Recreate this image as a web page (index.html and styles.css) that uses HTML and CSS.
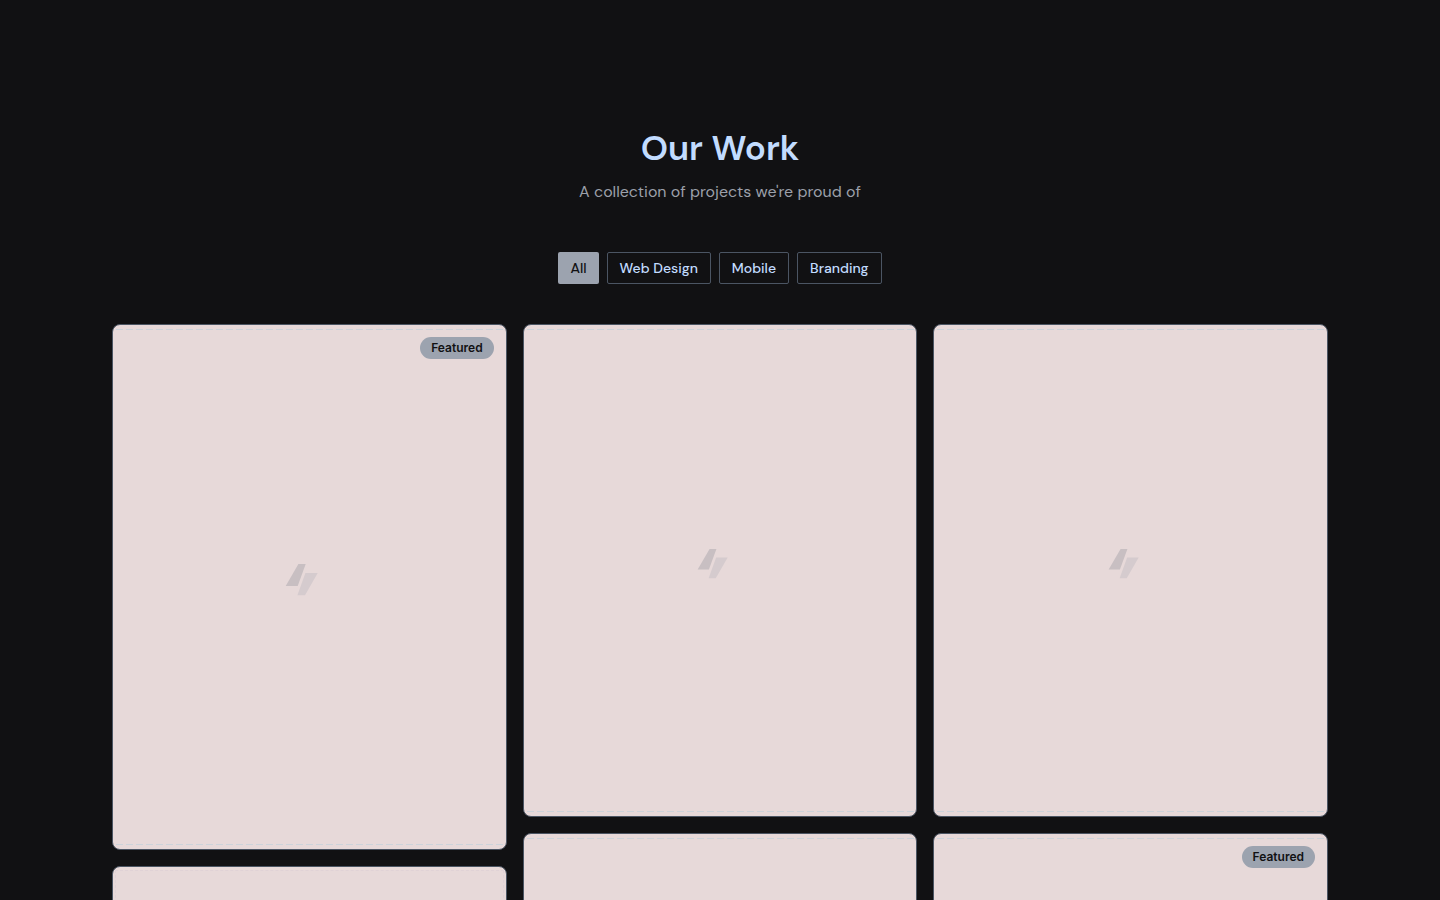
FILE: index.html
```html
<!DOCTYPE html>
<html lang="en">
<head>
<meta charset="utf-8">
<meta name="viewport" content="width=device-width, initial-scale=1">
<title>Our Work</title>
<link rel="stylesheet" href="styles.css">
</head>
<body>
<svg class="sprite" aria-hidden="true">
  <symbol id="mark" viewBox="0 0 48 48">
    <path d="M13.4 1H20.7L12.7 23H.7Z" fill="#c8bfc2"/>
    <path d="M20.4 10H32.7L20 32.3H12.4Z" fill="#d5cbce"/>
  </symbol>
</svg>
<main class="work">
  <header class="intro">
    <h1 class="title">Our Work</h1>
    <p class="subtitle">A collection of projects we're proud of</p>
  </header>
  <nav class="filters" aria-label="Project categories">
    <button class="filter active" type="button">All</button>
    <button class="filter" type="button">Web Design</button>
    <button class="filter" type="button">Mobile</button>
    <button class="filter" type="button">Branding</button>
  </nav>
  <section class="gallery">
    <div class="column">
      <article class="card tall"><svg class="mark"><use href="#mark"/></svg><span class="badge">Featured</span></article>
      <article class="card wide"></article>
    </div>
    <div class="column">
      <article class="card"><svg class="mark"><use href="#mark"/></svg></article>
      <article class="card"></article>
    </div>
    <div class="column">
      <article class="card"><svg class="mark"><use href="#mark"/></svg></article>
      <article class="card"><span class="badge">Featured</span></article>
    </div>
  </section>
</main>
</body>
</html>
```
FILE: styles.css
```css
* { box-sizing: border-box; }
html { background: #111113; scrollbar-width: none; }
body {
  margin: 0;
  background: #111113;
  font-family: "DM Sans", Inter, sans-serif;
}
.sprite { display: none; }
.work { max-width: 1280px; margin: 0 auto; padding: 128px 32px; }
.intro { text-align: center; margin-bottom: 48px; }
.title { margin: 0 0 12px; color: #c2dcff; font-size: 35px; line-height: 40px; font-weight: 600; }
.subtitle { margin: 0; color: #9ca0aa; font-size: 16px; line-height: 24px; }
.filters { display: flex; flex-wrap: wrap; justify-content: center; gap: 8px; margin-bottom: 40px; }
.filter {
  height: 32px;
  padding: 0 12px;
  border: 1px solid #4b5563;
  border-radius: 2px;
  background: transparent;
  color: #c2dcff;
  font: 500 14px/20px "DM Sans", Inter, sans-serif;
}
.filter.active { background: #9ca3af; border: 0; color: #111113; }
.gallery { display: grid; grid-template-columns: repeat(3, 1fr); gap: 16px; }
.column { display: flex; flex-direction: column; gap: 16px; }
.card {
  position: relative;
  display: grid;
  place-items: center;
  border: 1px solid #4b5563;
  border-radius: 8px;
  overflow: hidden;
  background: #e7d9d9;
}
.card::before {
  content: "";
  grid-area: 1 / 1;
  width: 100%;
  aspect-ratio: 4 / 5;
  background:
    repeating-linear-gradient(90deg, transparent 0 3px, #ccd3da 3px 10px) 0 4px / 100% 1px no-repeat,
    repeating-linear-gradient(90deg, transparent 0 3px, #ccd3da 3px 10px) 0 calc(100% - 4px) / 100% 1px no-repeat;
}
.card.tall::before { aspect-ratio: 3 / 4; }
.card.wide::before {
  aspect-ratio: 4 / 3;
  background: none;
  width: calc(100% - 6px);
  margin: 3px;
  border: 1px dashed #e0d2d6;
}
.mark { grid-area: 1 / 1; width: 45px; height: 45px; }
.tall .mark { width: 48px; height: 48px; }
.badge {
  position: absolute;
  top: 12px;
  right: 12px;
  padding: 3px 11px;
  border-radius: 11px;
  background: #9ca3af;
  color: #111113;
  font-family: Inter, sans-serif;
  font-size: 12px;
  line-height: 16px;
  font-weight: 600;
}
```
